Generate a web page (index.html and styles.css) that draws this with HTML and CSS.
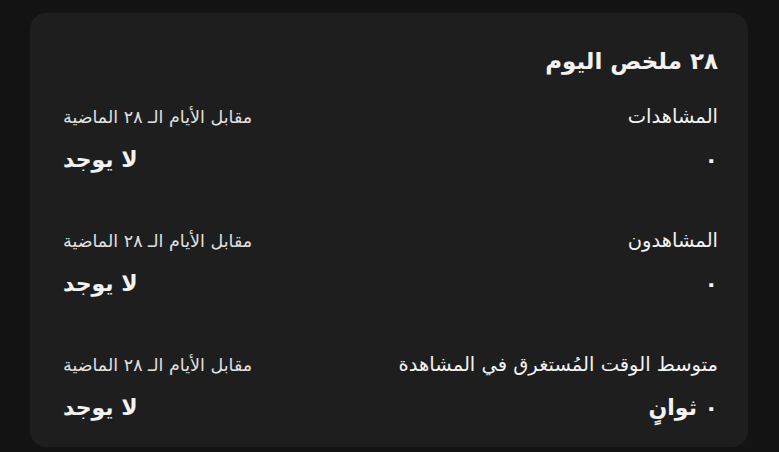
FILE: index.html
```html
<!DOCTYPE html>
<html lang="ar" dir="rtl">
<head>
  <meta charset="UTF-8">
  <title>ملخص اليوم</title>
  <link rel="stylesheet" href="styles.css">
</head>
<body>

<div class="card">
  <h2 class="title">٢٨ ملخص اليوم</h2>

  <div class="row">
    <div class="col">
      <div class="label">المشاهدات</div>
      <div class="value">٠</div>
    </div>
    <div class="col compare">
      <div class="sub">مقابل الأيام الـ ٢٨ الماضية</div>
      <div class="value">لا يوجد</div>
    </div>
  </div>

  <div class="row">
    <div class="col">
      <div class="label">المشاهدون</div>
      <div class="value">٠</div>
    </div>
    <div class="col compare">
      <div class="sub">مقابل الأيام الـ ٢٨ الماضية</div>
      <div class="value">لا يوجد</div>
    </div>
  </div>

  <div class="row">
    <div class="col">
      <div class="label">متوسط الوقت المُستغرق في المشاهدة</div>
      <div class="value">٠ ثوانٍ</div>
    </div>
    <div class="col compare">
      <div class="sub">مقابل الأيام الـ ٢٨ الماضية</div>
      <div class="value">لا يوجد</div>
    </div>
  </div>
</div>

</body>
</html>
```

FILE: styles.css
```css
body {
  margin: 0;
  background: #131313;
  font-family: "DejaVu Sans", sans-serif;
  color: #f2f2f2;
  padding: 13px 31px 0 30px;
}
.card {
  background: #1e1e1e;
  border-radius: 16px;
  padding: 30px 30px 20px 33px;
  height: 434px;
  box-sizing: border-box;
}
.title {
  margin: 0 0 23px;
  font-size: 23px;
  font-weight: bold;
  line-height: 36px;
}
.row {
  display: flex;
  justify-content: space-between;
  margin-bottom: 51px;
}
.col {
  display: flex;
  flex-direction: column;
  gap: 13px;
}
.compare {
  align-items: flex-end;
}
.label {
  font-size: 19.5px;
  line-height: 30px;
}
.sub {
  font-size: 17.5px;
  line-height: 30px;
  color: #e0e0e0;
}
.value {
  font-size: 22px;
  font-weight: bold;
  line-height: 30px;
}
```
